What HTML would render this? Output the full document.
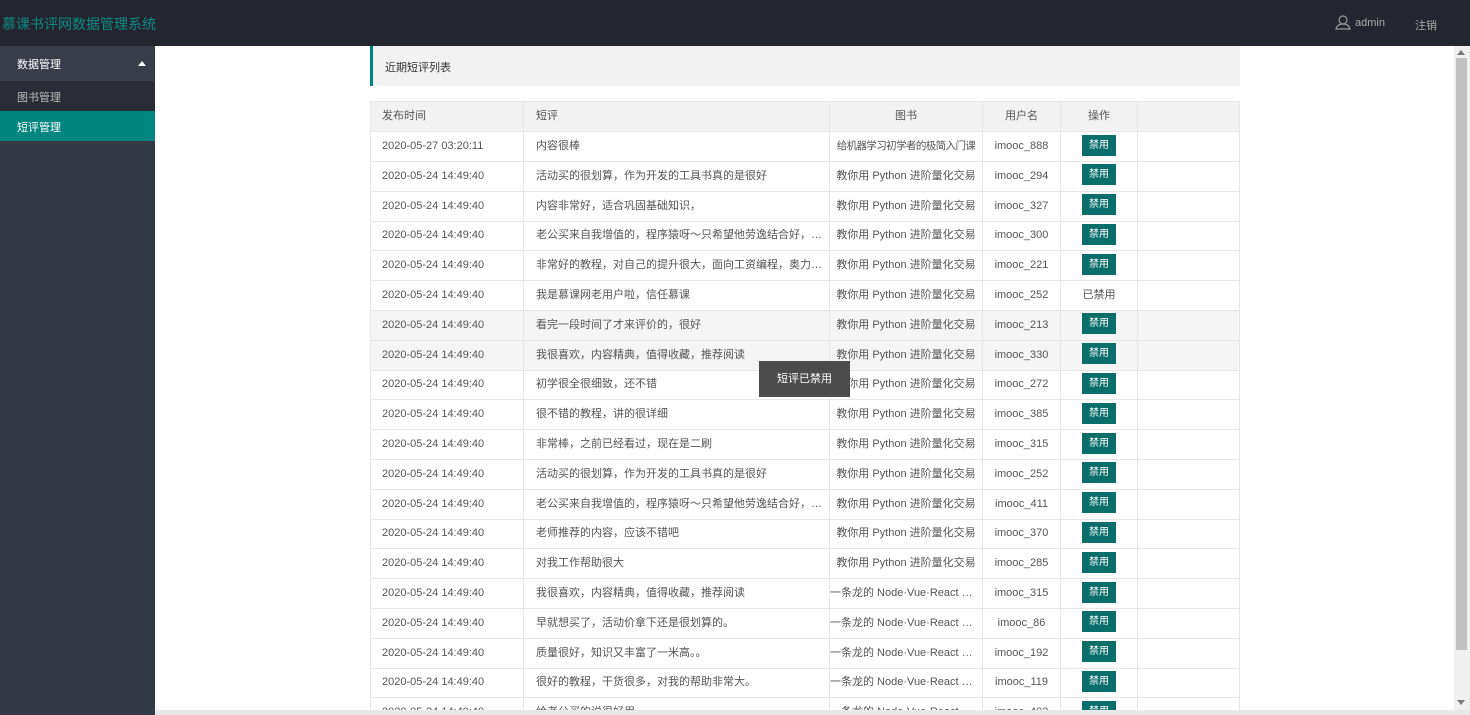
<!DOCTYPE html>
<html style="overflow:hidden;height:715px"><head><meta charset="utf-8"><style>
*{box-sizing:border-box;margin:0;padding:0}
body{width:1470px;height:715px;overflow:hidden;background:#fff;font-family:"Liberation Sans","Noto Sans CJK SC",sans-serif;font-size:11px;color:#555;position:relative}
.hdr{position:absolute;left:0;top:0;width:1470px;height:46px;background:#23262e}
.logo{position:absolute;left:2px;top:14px;font-size:14px;color:#0f8a84}
.adm{position:absolute;left:1355px;top:17px;color:#aaa;font-size:11px}
.out{position:absolute;left:1415px;top:17px;color:#aaa;font-size:11px}
.side{position:absolute;left:0;top:46px;width:155px;height:669px;background:#343a45}
.s1{position:absolute;left:0;top:0;width:155px;height:35px;background:#393d49;color:#fff;padding:10px 0 0 17px}
.s1:after{content:"";position:absolute;right:9px;top:15px;border:4px solid transparent;border-bottom:5px solid #fff;border-top:0}
.s2{position:absolute;left:0;top:35px;width:155px;height:30px;background:#2a2d36;color:#bbb;padding:8px 0 0 17px}
.s3{position:absolute;left:0;top:65px;width:155px;height:30px;background:#008580;color:#fff;padding:8px 0 0 17px}
.title{position:absolute;left:370px;top:46px;width:870px;height:40px;background:#f2f2f2;border-left:3px solid #008580;color:#333;padding:13px 0 0 12px;font-size:11px}
.tbl{position:absolute;left:370px;top:101px;width:870px;height:614px;border:1px solid #e6e6e6;border-bottom:0;overflow:hidden}
.row{position:absolute;left:0;width:868px;height:30px;border-bottom:1px solid #e6e6e6}
.row div{position:absolute;top:0;height:100%;line-height:29px;white-space:nowrap;overflow:hidden}
.c1{left:0;width:153px;padding-left:11px;border-right:1px solid #e6e6e6}
.c2{left:153px;width:306px;padding-left:12px;border-right:1px solid #e6e6e6}
.c3{left:459px;width:153px;text-align:center;border-right:1px solid #e6e6e6;text-overflow:ellipsis}
.c4{left:612px;width:78px;text-align:center;border-right:1px solid #e6e6e6}
.c5{left:690px;width:77px;text-align:center;border-right:1px solid #e6e6e6}
.hd{top:0;height:30px;background:#f2f2f2}
.b{display:inline-block;width:34px;height:21px;line-height:21px;background:#0a6e6a;color:#fff;font-size:10px;vertical-align:middle;margin-top:-2px}
.hv{background:#f5f5f5}
.toast{position:absolute;left:759px;top:361px;width:91px;height:36px;background:#4c4c4c;color:#fff;line-height:36px;text-align:center;font-size:11px}
.sb{position:absolute;left:1454px;top:46px;width:16px;height:664px;background:#f0f0f0}
.th{position:absolute;left:1456px;top:58px;width:11px;height:592px;background:#c1c1c1}
.bot{position:absolute;left:155px;top:710px;width:1315px;height:5px;background:#e8e8e8}
</style></head><body>
<div class="hdr"><div class="logo">慕课书评网数据管理系统</div>
<svg style="position:absolute;left:1335px;top:15px" width="16" height="15" viewBox="0 0 16 15"><circle cx="8" cy="5" r="4" fill="none" stroke="#999" stroke-width="1.2"/><path d="M1 14c1-4 4-5 7-5s6 1 7 5z" fill="none" stroke="#999" stroke-width="1.2"/></svg>
<div class="adm">admin</div><div class="out">注销</div></div>
<div class="side"><div class="s1">数据管理</div><div class="s2">图书管理</div><div class="s3">短评管理</div></div>
<div class="title">近期短评列表</div>
<div class="tbl">
<div class="row hd"><div class="c1">发布时间</div><div class="c2">短评</div><div class="c3">图书</div><div class="c4">用户名</div><div class="c5">操作</div></div>
<div id="rows"></div>
</div>
<div class="toast">短评已禁用</div>
<div class="sb"></div><div class="th"></div>
<svg style="position:absolute;left:1457px;top:50px" width="8" height="5"><path d="M0 5L4 0L8 5z" fill="#777"/></svg>
<svg style="position:absolute;left:1457px;top:700px" width="8" height="5"><path d="M0 0L4 5L8 0z" fill="#777"/></svg>
<div class="bot"></div>
<script>
var P="教你用 Python 进阶量化交易",N="一条龙的 Node·Vue·React 服务端渲染全栈项目";
var d=[["2020-05-27 03:20:11","内容很棒","给机器学习初学者的极简入门课","imooc_888"],
["活动买的很划算，作为开发的工具书真的是很好",P,"imooc_294"],
["内容非常好，适合巩固基础知识，",P,"imooc_327"],
["老公买来自我增值的，程序猿呀～只希望他劳逸结合好，…",P,"imooc_300"],
["非常好的教程，对自己的提升很大，面向工资编程，奥力…",P,"imooc_221"],
["我是慕课网老用户啦，信任慕课",P,"imooc_252",1],
["看完一段时间了才来评价的，很好",P,"imooc_213"],
["我很喜欢，内容精典，值得收藏，推荐阅读",P,"imooc_330"],
["初学很全很细致，还不错",P,"imooc_272"],
["很不错的教程，讲的很详细",P,"imooc_385"],
["非常棒，之前已经看过，现在是二刷",P,"imooc_315"],
["活动买的很划算，作为开发的工具书真的是很好",P,"imooc_252"],
["老公买来自我增值的，程序猿呀～只希望他劳逸结合好，…",P,"imooc_411"],
["老师推荐的内容，应该不错吧",P,"imooc_370"],
["对我工作帮助很大",P,"imooc_285"],
["我很喜欢，内容精典，值得收藏，推荐阅读",N,"imooc_315"],
["早就想买了，活动价拿下还是很划算的。",N,"imooc_86"],
["质量很好，知识又丰富了一米高。。",N,"imooc_192"],
["很好的教程，干货很多，对我的帮助非常大。",N,"imooc_119"],
["给老公买的说很好用",N,"imooc_403"]];
var h="";
d.forEach(function(r,i){var t,c,b,u,dis;if(i==0){t=r[0];c=r[1];b=r[2];u=r[3]}else{t="2020-05-24 14:49:40";c=r[0];b=r[1];u=r[2];dis=r[3]}
var top=30+i*29.8;var hv=(i==6||i==7)?" hv":"";
var bs=i>=15?"text-align:left;text-overflow:ellipsis;padding-right:4px":(i==0?"letter-spacing:-0.6px;font-size:10.5px":"");
h+='<div class="row'+hv+'" style="top:'+top+'px"><div class="c1">'+t+'</div><div class="c2">'+c+'</div><div class="c3" style="'+bs+'">'+b+'</div><div class="c4">'+u+'</div><div class="c5">'+(dis?'已禁用':'<span class="b">禁用</span>')+'</div></div>';});
document.getElementById("rows").innerHTML=h;
</script>
</body></html>
